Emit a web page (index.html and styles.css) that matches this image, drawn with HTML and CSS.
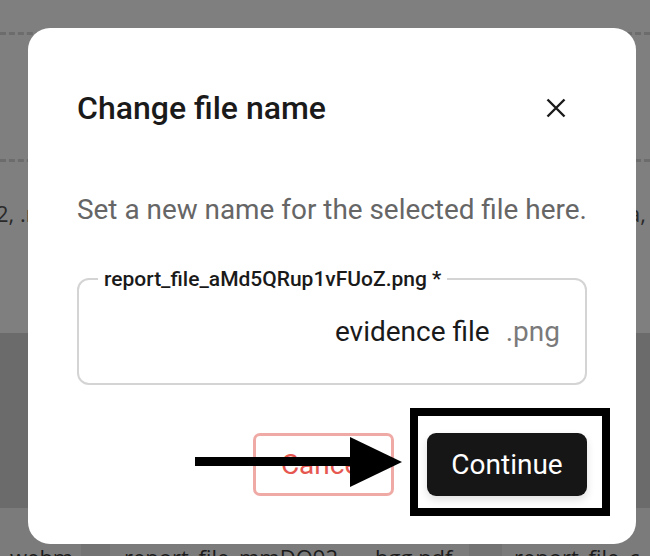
FILE: index.html
```html
<!DOCTYPE html>
<html lang="en">
<head>
<meta charset="utf-8">
<title>Change file name</title>
<link rel="stylesheet" href="styles.css">
</head>
<body>
<div class="page">
  <div class="band band-top">
    <div class="dash"></div>
  </div>
  <div class="band band-mid">
    <div class="dash"></div>
  </div>
  <div class="band band-text">
    <span class="bg-text bg-left">2, .rar, .7z, .txt, .csv, .json</span>
    <span class="bg-text bg-right">.xml, .mp3, .wav, .wma,</span>
  </div>
  <div class="band band-dark"></div>
  <div class="band band-files">
    <span class="cell c1">webm</span>
    <span class="sep s1"></span>
    <span class="cell c2">report_file_mmDQ92</span>
    <span class="cell c3">bgg.pdf</span>
    <span class="sep s2"></span>
    <span class="cell c4">report_file_c</span>
  </div>
</div>

<div class="modal" role="dialog" aria-labelledby="dlg-title">
  <div class="modal-head">
    <h2 id="dlg-title" class="modal-title">Change file name</h2>
    <button class="close" aria-label="Close">
      <svg width="20" height="20" viewBox="0 0 20 20"><path d="M1.5 1.5 L18.5 18.5 M18.5 1.5 L1.5 18.5" stroke="#1a1a1a" stroke-width="2.4" fill="none"/></svg>
    </button>
  </div>
  <p class="modal-desc">Set a new name for the selected file here.</p>
  <fieldset class="field">
    <legend class="field-label">report_file_aMd5QRup1vFUoZ.png *</legend>
    <div class="field-row">
      <span class="field-value">evidence file</span>
      <span class="field-ext">.png</span>
    </div>
  </fieldset>
  <div class="actions">
    <button class="btn btn-cancel">Cancel</button>
    <button class="btn btn-continue">Continue</button>
  </div>
</div>

<div class="highlight"></div>
<svg class="arrow" width="210" height="74" viewBox="0 0 210 74">
  <rect x="0" y="32" width="160" height="9" fill="#000"/>
  <polygon points="155,12 207,37 155,62" fill="#000"/>
</svg>
</body>
</html>
```

FILE: styles.css
```css
html, body {
  margin: 0;
  padding: 0;
}
body {
  width: 650px;
  height: 556px;
  overflow: hidden;
  position: relative;
  font-family: Roboto, "Noto Sans", sans-serif;
  background: #7f7f7f;
}

.page {
  display: flex;
  flex-direction: column;
  height: 556px;
  overflow: hidden;
  font-family: "Open Sans", sans-serif;
}
.band { flex: none; }
.band-top { height: 35px; display: flex; align-items: flex-end; }
.band-mid { height: 127px; display: flex; align-items: flex-end; }
.dash {
  width: 100%;
  border-top: 3px dashed #6c6c6c;
}
.band-text {
  height: 171px;
  display: flex;
  justify-content: space-between;
  white-space: nowrap;
  padding-top: 36px;
  box-sizing: border-box;
  overflow: hidden;
}
.bg-text {
  font-size: 22px;
  line-height: 30px;
  color: #2a2a2a;
}
.bg-left { margin-left: -4px; }
.bg-right { margin-right: 4px; }
.band-dark {
  height: 175px;
  background: #6b6b6b;
}
.band-files {
  height: 48px;
  background: #7b7b7b;
  display: flex;
  align-items: flex-end;
  white-space: nowrap;
  overflow: hidden;
}
.cell {
  font-size: 22px;
  color: #1c1c1c;
  line-height: 1;
  margin-bottom: -12px;
  flex: none;
}
.c1 { width: 81px; padding-left: 10px; box-sizing: border-box; }
.c2 { width: 251px; padding-left: 14px; box-sizing: border-box; }
.c3 { width: 108px; padding-left: 14px; box-sizing: border-box; }
.c4 { padding-left: 12px; }
.sep {
  flex: none;
  align-self: stretch;
  background: #737373;
}
.s1 { width: 29px; }
.s2 { width: 33px; }

.modal {
  position: absolute;
  left: 28px;
  top: 28px;
  width: 608px;
  height: 516px;
  box-sizing: border-box;
  background: #fff;
  border-radius: 22px;
  padding: 62px 49px 48px;
  display: flex;
  flex-direction: column;
}
.modal-head {
  display: flex;
  align-items: center;
  justify-content: space-between;
  height: 36px;
}
.modal-title {
  margin: 0;
  font-size: 32px;
  font-weight: 500;
  color: #1a1a1a;
  line-height: 36px;
}
.close {
  border: 0;
  background: none;
  padding: 0;
  margin-right: 21px;
  width: 20px;
  height: 20px;
  display: flex;
}
.modal-desc {
  margin: 67px 0 0;
  font-size: 27.9px;
  line-height: 34px;
  color: #666;
  white-space: nowrap;
}
.field {
  margin: 41px 0 0;
  height: 117px;
  box-sizing: border-box;
  border: 2px solid #d4d4d4;
  border-radius: 12px;
  padding: 26px 25px 0 19px;
  min-width: 0;
}
.field-label {
  font-size: 21px;
  font-weight: 500;
  color: #1a1a1a;
  padding: 0 6px;
  line-height: 22px;
}
.field-row {
  display: flex;
  justify-content: flex-end;
  align-items: center;
  gap: 16px;
  line-height: 32px;
}
.field-value {
  font-size: 28px;
  color: #1a1a1a;
}
.field-ext {
  font-size: 28px;
  color: #7a7a7a;
}
.actions {
  margin-top: auto;
  display: flex;
  justify-content: flex-end;
  gap: 33px;
}
.btn {
  height: 63px;
  box-sizing: border-box;
  font-family: Roboto, sans-serif;
  font-size: 28px;
  cursor: pointer;
}
.btn-cancel {
  width: 141px;
  border: 3px solid #f0aaa6;
  border-radius: 7px;
  background: #fff;
  color: #e5574f;
}
.btn-continue {
  width: 160px;
  border: 0;
  border-radius: 9px;
  background: #161616;
  color: #fff;
  box-shadow: 0 4px 8px rgba(0,0,0,0.12);
}

.highlight {
  position: absolute;
  left: 410px;
  top: 408px;
  width: 200px;
  height: 108px;
  box-sizing: border-box;
  border: 8px solid #000;
}
.arrow {
  position: absolute;
  left: 195px;
  top: 425px;
}
```
